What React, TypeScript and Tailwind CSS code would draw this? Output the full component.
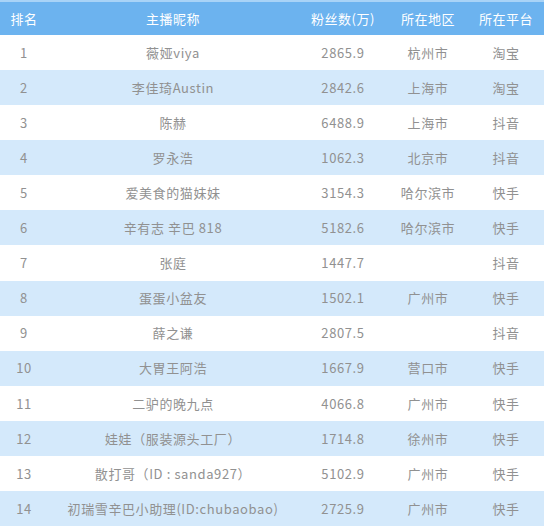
import React from "react";

const rows: [string, string, string, string, string][] = [
  ["1", "薇娅viya", "2865.9", "杭州市", "淘宝"],
  ["2", "李佳琦Austin", "2842.6", "上海市", "淘宝"],
  ["3", "陈赫", "6488.9", "上海市", "抖音"],
  ["4", "罗永浩", "1062.3", "北京市", "抖音"],
  ["5", "爱美食的猫妹妹", "3154.3", "哈尔滨市", "快手"],
  ["6", "辛有志 辛巴 818", "5182.6", "哈尔滨市", "快手"],
  ["7", "张庭", "1447.7", "", "抖音"],
  ["8", "蛋蛋小盆友", "1502.1", "广州市", "快手"],
  ["9", "薛之谦", "2807.5", "", "抖音"],
  ["10", "大胃王阿浩", "1667.9", "营口市", "快手"],
  ["11", "二驴的晚九点", "4066.8", "广州市", "快手"],
  ["12", "娃娃（服装源头工厂）", "1714.8", "徐州市", "快手"],
  ["13", "散打哥（ID : sanda927）", "5102.9", "广州市", "快手"],
  ["14", "初瑞雪辛巴小助理(ID:chubaobao)", "2725.9", "广州市", "快手"],
];

const cols = "grid grid-cols-[48px_250px_90px_80px_76px] items-center";

export default function App() {
  return (
    <div
      className="w-[544px] h-[526px] flex flex-col bg-white overflow-hidden"
      style={{ fontFamily: '"Noto Sans CJK SC", "Noto Sans", sans-serif' }}
    >
      <div className={`${cols} h-[35px] shrink-0 bg-[#6cb3ef] border-t-2 border-[#a8d3f7] text-white text-[13px] tracking-[0.5px]`}>
        <div className="text-center">排名</div>
        <div className="text-center">主播昵称</div>
        <div className="text-center">粉丝数(万)</div>
        <div className="text-center">所在地区</div>
        <div className="text-center">所在平台</div>
      </div>
      {rows.map((r, i) => (
        <div
          key={r[0]}
          className={`${cols} flex-1 text-[13px] text-[#919191] tracking-[0.6px] ${
            i % 2 === 1 ? "bg-[#d4e9fb]" : "bg-white"
          }`}
        >
          <div className="text-center">{r[0]}</div>
          <div className="text-center whitespace-nowrap">{r[1]}</div>
          <div className="text-center tracking-[0.6px]">{r[2]}</div>
          <div className="text-center">{r[3]}</div>
          <div className="text-center">{r[4]}</div>
        </div>
      ))}
    </div>
  );
}
